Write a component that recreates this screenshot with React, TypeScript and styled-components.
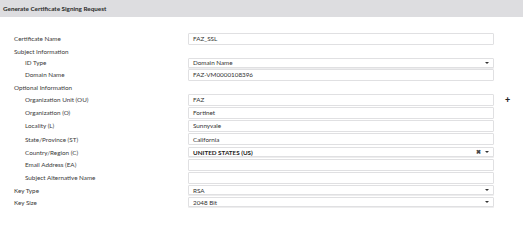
import React from 'react';
import styled, { createGlobalStyle } from 'styled-components';

const GlobalStyle = createGlobalStyle`
  html, body {
    margin: 0;
    padding: 0;
    background: #ffffff;
  }
  body {
    font-family: Lato, "Open Sans", sans-serif;
    color: #333333;
  }
`;

const Page = styled.div`
  width: 523px;
  height: 242px;
  overflow: hidden;
  background: #ffffff;
`;

const Header = styled.div`
  height: 17px;
  background: #dddde0;
  display: flex;
  align-items: center;
  padding-left: 3px;
  font-size: 6.3px;
  font-weight: 700;
  color: #2a2a2a;
`;

const Form = styled.div`
  padding-top: 15px;
  display: flex;
  flex-direction: column;
`;

const Row = styled.div<{ $h: number }>`
  height: ${({ $h }) => $h}px;
  display: grid;
  grid-template-columns: 188px 306px 29px;
  align-items: center;
`;

const Label = styled.div<{ $indent?: boolean }>`
  padding-left: ${({ $indent }) => ($indent ? 25 : 14)}px;
  font-size: 6.3px;
  color: #3a3a3a;
  white-space: nowrap;
`;

const Input = styled.div`
  box-sizing: border-box;
  height: 12px;
  border: 1px solid #e0e0e2;
  border-radius: 1px;
  background: #ffffff;
  display: flex;
  align-items: center;
  padding-left: 4px;
  font-size: 6.3px;
  color: #333333;
`;

const Select = styled(Input)<{ $strong?: boolean }>`
  height: 10px;
  padding-right: 4px;
  justify-content: space-between;
  box-shadow: 0 1px 0 #ededee;
  font-weight: ${({ $strong }) => ($strong ? 700 : 400)};
  color: ${({ $strong }) => ($strong ? '#222' : '#333')};
`;

const Controls = styled.div`
  display: flex;
  align-items: center;
  gap: 4px;
`;

const Caret = styled.span`
  width: 0;
  height: 0;
  border-left: 2px solid transparent;
  border-right: 2px solid transparent;
  border-top: 2.5px solid #333;
`;

const Clear = styled.span`
  font-size: 6px;
  line-height: 1;
  color: #444;
`;

const Plus = styled.div`
  padding-left: 11px;
  font-size: 9px;
  font-weight: 900;
  color: #222;
  line-height: 1;
`;

type Field =
  | { kind: 'section'; label: string; h: number }
  | { kind: 'input'; label: string; value?: string; h: number; indent?: boolean; plus?: boolean }
  | { kind: 'select'; label: string; value: string; h: number; indent?: boolean; clear?: boolean };

const fields: Field[] = [
  { kind: 'input', label: 'Certificate Name', value: 'FAZ_SSL', h: 13 },
  { kind: 'section', label: 'Subject Information', h: 12 },
  { kind: 'select', label: 'ID Type', value: 'Domain Name', h: 11, indent: true },
  { kind: 'input', label: 'Domain Name', value: 'FAZ-VM0000108396', h: 13, indent: true },
  { kind: 'section', label: 'Optional Information', h: 12 },
  { kind: 'input', label: 'Organization Unit (OU)', value: 'FAZ', h: 13, indent: true, plus: true },
  { kind: 'input', label: 'Organization (O)', value: 'Fortinet', h: 13, indent: true },
  { kind: 'input', label: 'Locality (L)', value: 'Sunnyvale', h: 13, indent: true },
  { kind: 'input', label: 'State/Province (ST)', value: 'California', h: 14, indent: true },
  { kind: 'select', label: 'Country/Region (C)', value: 'UNITED STATES (US)', h: 12, indent: true, clear: true },
  { kind: 'input', label: 'Email Address (EA)', h: 13, indent: true },
  { kind: 'input', label: 'Subject Alternative Name', h: 13, indent: true },
  { kind: 'select', label: 'Key Type', value: 'RSA', h: 12 },
  { kind: 'select', label: 'Key Size', value: '2048 Bit', h: 12 },
];

const App: React.FC = () => {
  return (
    <Page>
      <GlobalStyle />
      <Header>Generate Certificate Signing Request</Header>
      <Form>
        {fields.map((f) => (
          <Row key={f.label} $h={f.h}>
            <Label $indent={f.kind !== 'section' && f.indent}>{f.label}</Label>
            {f.kind === 'input' && <Input>{f.value}</Input>}
            {f.kind === 'select' && (
              <Select $strong={f.clear}>
                <span>{f.value}</span>
                <Controls>
                  {f.clear && <Clear>✖</Clear>}
                  <Caret />
                </Controls>
              </Select>
            )}
            {f.kind === 'input' && f.plus ? <Plus>+</Plus> : <span />}
          </Row>
        ))}
      </Form>
    </Page>
  );
};

export default App;
